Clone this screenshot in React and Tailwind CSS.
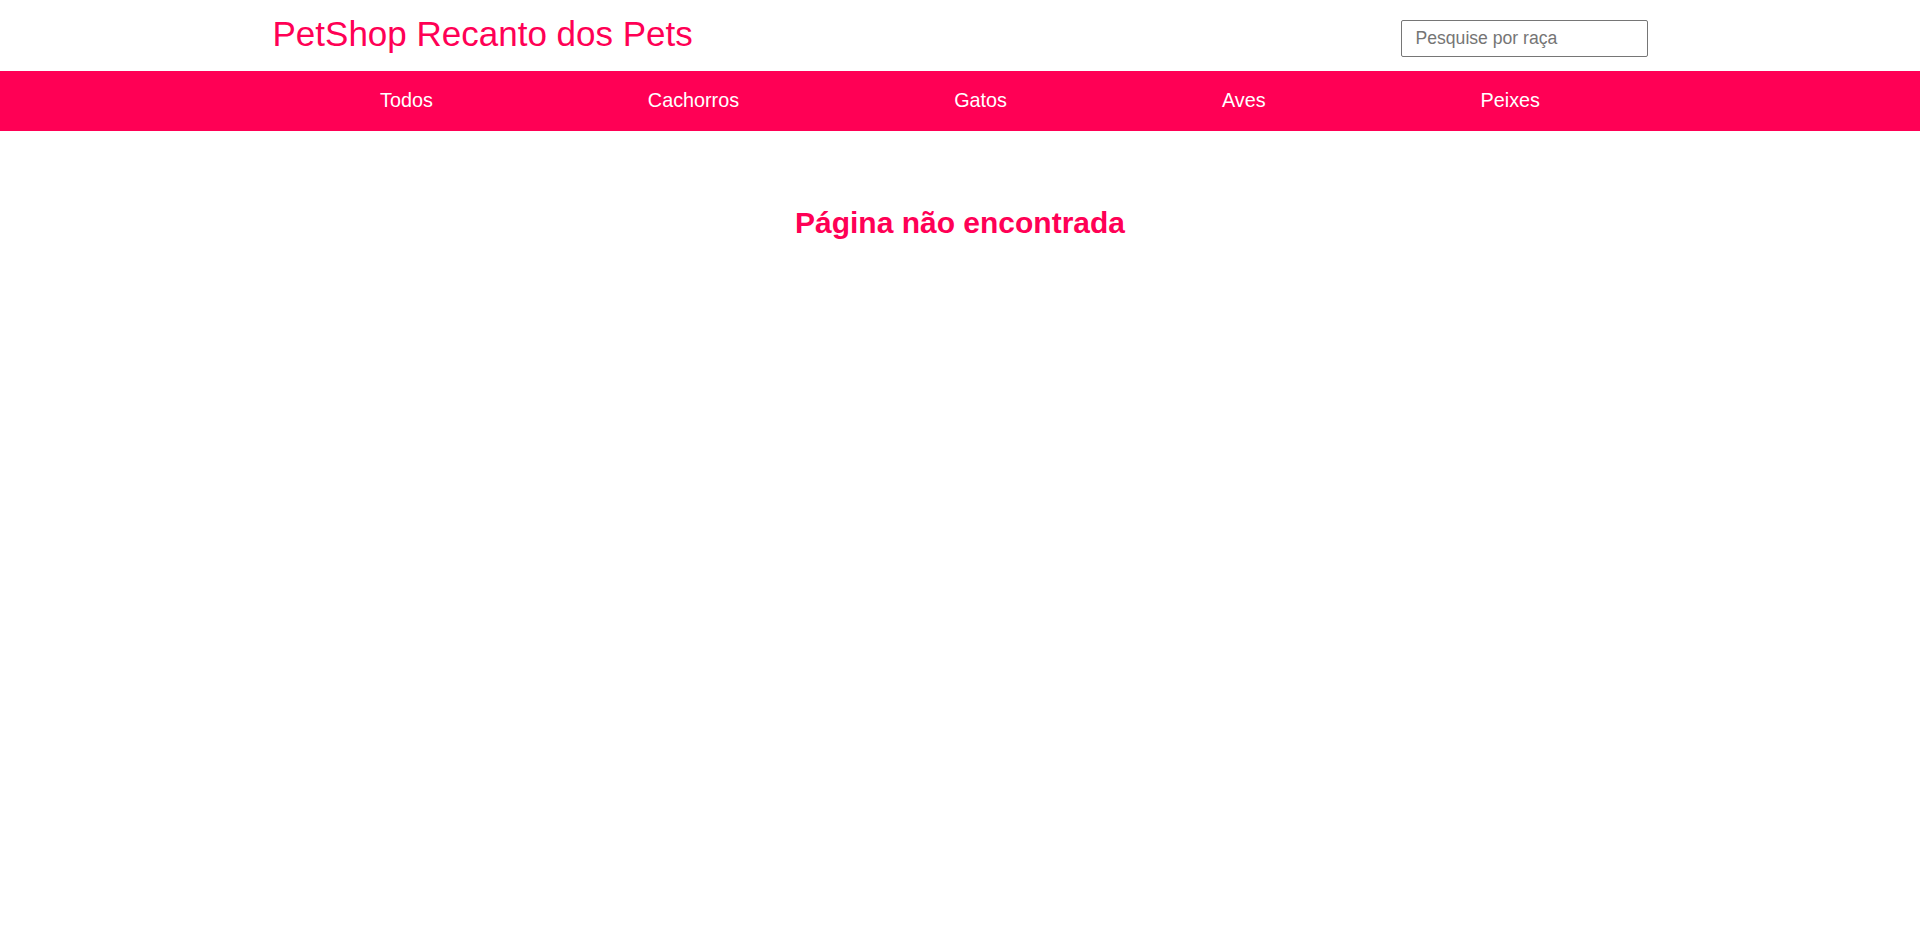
const categories = ['Todos', 'Cachorros', 'Gatos', 'Aves', 'Peixes'];

export default function App() {
  return (
    <div className="min-h-screen bg-white font-['Liberation_Sans',Arial,sans-serif]">
      {/* Header */}
      <header className="h-[71px]">
        <div className="w-[1375px] mx-auto flex justify-between items-start">
          <h1 className="mt-[14px] text-[35px] leading-[40px] font-normal text-[#ff0055]">
            PetShop Recanto dos Pets
          </h1>
          <input
            type="text"
            placeholder="Pesquise por raça"
            className="mt-[20px] w-[247px] h-[37px] px-[14px] border border-[#767676] rounded-[2px] text-[17.6px] text-black placeholder:text-[#757575] outline-none"
          />
        </div>
      </header>

      {/* Nav */}
      <nav className="h-[60px] bg-[#ff0055]">
        <ul className="w-[1375px] h-full mx-auto flex justify-around items-center">
          {categories.map((c) => (
            <li key={c}>
              <a href="#" className="text-white text-[19.8px]">
                {c}
              </a>
            </li>
          ))}
        </ul>
      </nav>

      <h2 className="mt-[69px] text-center text-[30px] font-bold text-[#ff0055]">
        Página não encontrada
      </h2>
    </div>
  );
}
